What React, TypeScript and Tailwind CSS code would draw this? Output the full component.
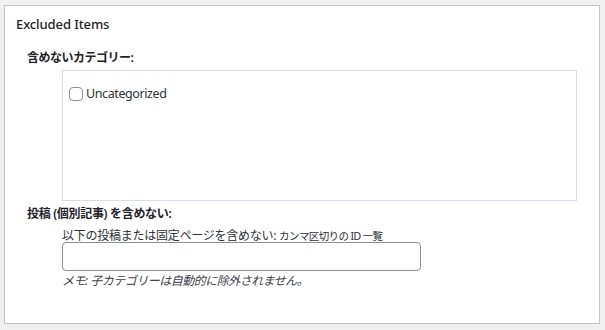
import React, { useState } from 'react';

const App: React.FC = () => {
  const [checked, setChecked] = useState(false);
  const [ids, setIds] = useState('');

  return (
    <div
      className="w-[605px] h-[330px] bg-[#f0f0f1] pt-[5px] pl-[4px] text-[#1d2327] text-[13px]"
      style={{ fontFamily: '"Noto Sans", "Noto Sans CJK JP", sans-serif' }}
    >
      <div className="w-[596px] h-[319px] bg-white border border-[#c3c4c7] pl-[11px]">
        <h2 className="mt-[8px] leading-[20px] text-[13px] font-medium tracking-[-0.1px]">Excluded Items</h2>

        {/* カテゴリー */}
        <div className="mt-[14px] ml-[11px] leading-[20px] font-semibold text-[12px] tracking-[-0.5px]">
          含めないカテゴリー:
        </div>
        <div className="mt-[2px] ml-[46px] w-[515px] h-[131px] border border-[#cfdfea] pt-[15px] pl-[6px]">
          <label className="flex items-center gap-[3px] leading-[16px]">
            <input
              type="checkbox"
              checked={checked}
              onChange={(e) => setChecked(e.target.checked)}
              className="appearance-none w-[14px] h-[14px] border border-[#8c8f94] rounded-[4px] bg-white"
            />
            <span className="text-[#2c3338] text-[12.5px] tracking-[-0.4px]">Uncategorized</span>
          </label>
        </div>

        {/* 投稿 */}
        <div className="mt-[3px] ml-[11px] leading-[20px] font-semibold text-[12px] tracking-[-0.3px]">
          投稿 (個別記事) を含めない:
        </div>
        <div className="ml-[46px]">
          <div className="mt-[5px] leading-[14px] text-[#2c3338] text-[12px] tracking-[-0.25px]">
            以下の投稿または固定ページを含めない:{' '}
            <span className="text-[10.5px] tracking-[-0.6px]">カンマ区切りの ID 一覧</span>
          </div>
          <input
            type="text"
            value={ids}
            onChange={(e) => setIds(e.target.value)}
            className="block mt-[-1px] w-[359px] h-[29px] border border-[#8c8f94] rounded-[4px] px-2"
          />
          <div className="mt-[2px] leading-[16px] italic text-[#3c434a] text-[12px] tracking-[-0.5px]">
            メモ: 子カテゴリーは自動的に除外されません。
          </div>
        </div>
      </div>
    </div>
  );
};

export default App;
